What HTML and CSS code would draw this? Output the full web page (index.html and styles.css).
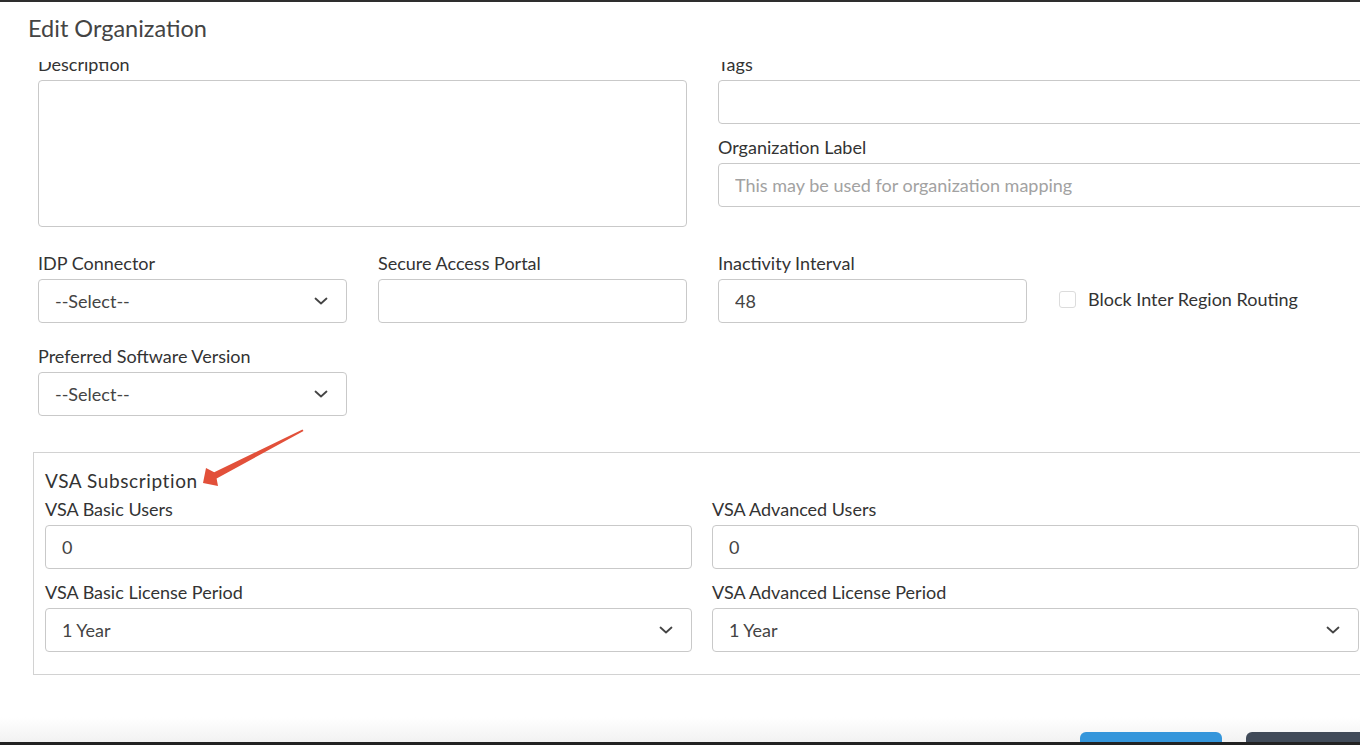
FILE: index.html
```html
<!DOCTYPE html>
<html>
<head>
    <meta charset="UTF-8">
    <title>Edit Organization</title>
    <link rel="stylesheet" href="styles.css">
</head>
<body>
    <div class="modal">
        <div class="modal-header">
            <h2 class="modal-title">Edit Organization</h2>
        </div>

        <div class="modal-body">
            <div class="form">
                <!-- Row 1 -->
                <div class="form-row">
                    <div class="field span-2">
                        <label class="field-label">Description</label>
                        <textarea class="input textarea"></textarea>
                    </div>
                    <div class="span-2">
                        <div class="field">
                            <label class="field-label">Tags</label>
                            <input type="text" class="input" value="">
                        </div>
                        <div class="field next">
                            <label class="field-label">Organization Label</label>
                            <input type="text" class="input" placeholder="This may be used for organization mapping">
                        </div>
                    </div>
                </div>

                <!-- Row 2 -->
                <div class="form-row row-2">
                    <div class="field">
                        <label class="field-label">IDP Connector</label>
                        <div class="select">
                            <span>--Select--</span>
                            <svg class="chevron" width="14" height="8" viewBox="0 0 14 8"><path d="M1.5 1.5 L7 6.5 L12.5 1.5" fill="none" stroke="#444" stroke-width="1.8" stroke-linecap="round" stroke-linejoin="round"/></svg>
                        </div>
                    </div>
                    <div class="field">
                        <label class="field-label">Secure Access Portal</label>
                        <input type="text" class="input" value="">
                    </div>
                    <div class="field">
                        <label class="field-label">Inactivity Interval</label>
                        <input type="text" class="input" value="48">
                    </div>
                    <div class="check-field">
                        <span class="checkbox"></span>
                        <span class="check-label">Block Inter Region Routing</span>
                    </div>
                </div>

                <!-- Row 3 -->
                <div class="form-row row-3">
                    <div class="field">
                        <label class="field-label">Preferred Software Version</label>
                        <div class="select">
                            <span>--Select--</span>
                            <svg class="chevron" width="14" height="8" viewBox="0 0 14 8"><path d="M1.5 1.5 L7 6.5 L12.5 1.5" fill="none" stroke="#444" stroke-width="1.8" stroke-linecap="round" stroke-linejoin="round"/></svg>
                        </div>
                    </div>
                </div>

                <!-- VSA subscription -->
                <div class="vsa-box">
                    <div class="vsa-title">VSA Subscription</div>
                    <div class="vsa-grid">
                        <div class="field">
                            <label class="field-label">VSA Basic Users</label>
                            <input type="text" class="input" value="0">
                        </div>
                        <div class="field">
                            <label class="field-label">VSA Advanced Users</label>
                            <input type="text" class="input" value="0">
                        </div>
                        <div class="field next">
                            <label class="field-label">VSA Basic License Period</label>
                            <div class="select">
                                <span>1 Year</span>
                                <svg class="chevron" width="14" height="8" viewBox="0 0 14 8"><path d="M1.5 1.5 L7 6.5 L12.5 1.5" fill="none" stroke="#444" stroke-width="1.8" stroke-linecap="round" stroke-linejoin="round"/></svg>
                            </div>
                        </div>
                        <div class="field next">
                            <label class="field-label">VSA Advanced License Period</label>
                            <div class="select">
                                <span>1 Year</span>
                                <svg class="chevron" width="14" height="8" viewBox="0 0 14 8"><path d="M1.5 1.5 L7 6.5 L12.5 1.5" fill="none" stroke="#444" stroke-width="1.8" stroke-linecap="round" stroke-linejoin="round"/></svg>
                            </div>
                        </div>
                    </div>
                </div>
            </div>
        </div>

        <div class="modal-footer">
            <button class="btn btn-primary"></button>
            <button class="btn btn-dark"></button>
        </div>

        <!-- screenshot annotation arrow -->
        <svg class="annotation" width="1360" height="745" viewBox="0 0 1360 745">
            <polygon points="203,483 206,468 214.2,472.2 302.5,429.5 303.5,431 216.6,478.6 218,486" fill="#e2503a"/>
        </svg>
    </div>
</body>
</html>
```

FILE: styles.css
```css
* {
    box-sizing: border-box;
}

body {
    margin: 0;
    padding: 0;
    font-family: Lato, "Open Sans", Arial, sans-serif;
    color: #333;
    background: #fff;
    overflow: hidden;
}

.modal {
    position: relative;
    width: 1360px;
    height: 745px;
    display: flex;
    flex-direction: column;
    overflow: hidden;
}

.modal-header {
    height: 62px;
    flex-shrink: 0;
    border-top: 2px solid #2e2e2e;
    padding: 11px 0 0 28px;
}

.modal-title {
    margin: 0;
    font-size: 23.5px;
    line-height: 30px;
    font-weight: 400;
    color: #444;
}

.modal-body {
    flex: 1;
    overflow: hidden;
    padding-left: 38px;
}

.form {
    width: 1340px;
    margin-top: -8px;
}

.form-row {
    display: grid;
    grid-template-columns: repeat(4, 309px);
    column-gap: 31px;
}

.row-2 {
    margin-top: 26px;
}

.row-3 {
    margin-top: 23px;
}

.span-2 {
    grid-column: span 2;
}

.field {
    display: flex;
    flex-direction: column;
}

.field.next {
    margin-top: 13px;
}

.field-label {
    font-size: 18px;
    line-height: 20px;
    margin-bottom: 6px;
    color: #333;
}

.input {
    height: 44px;
    width: 100%;
    border: 1px solid #c9c9c9;
    border-radius: 4px;
    padding: 0 16px;
    font-family: inherit;
    font-size: 18px;
    color: #444;
    background: #fff;
    outline: none;
}

.input::placeholder {
    color: #a2a2a2;
}

.textarea {
    height: 147px;
    resize: none;
}

.select {
    height: 44px;
    border: 1px solid #c9c9c9;
    border-radius: 4px;
    padding: 0 18px 0 16px;
    display: flex;
    align-items: center;
    justify-content: space-between;
    font-size: 18px;
    color: #444;
}

.chevron {
    display: block;
}

.check-field {
    display: flex;
    align-items: center;
    padding-left: 1px;
    margin-top: 36px;
    height: 20px;
}

.checkbox {
    width: 17px;
    height: 17px;
    border: 1px solid #dcdcdc;
    border-radius: 3px;
    margin-right: 12px;
}

.check-label {
    font-size: 18px;
    color: #333;
}

.vsa-box {
    margin: 36px 0 0 -5px;
    width: 1338px;
    border: 1px solid #d2d2d2;
    padding: 17px 11px 22px 11px;
}

.vsa-title {
    font-size: 19px;
    line-height: 22px;
    letter-spacing: 0.6px;
    color: #333;
    margin-bottom: 7px;
}

.vsa-grid {
    display: grid;
    grid-template-columns: 647px 647px;
    column-gap: 20px;
}

.modal-footer {
    height: 28px;
    flex-shrink: 0;
    background: linear-gradient(#fff, #f2f2f2);
    border-bottom: 3px solid #222;
    display: flex;
    align-items: flex-start;
    padding: 15px 0 0 1080px;
    overflow: hidden;
}

.btn {
    height: 40px;
    border: none;
    border-radius: 6px;
    flex-shrink: 0;
}

.btn-primary {
    width: 142px;
    background: #3596db;
    margin-right: 24px;
}

.btn-dark {
    width: 130px;
    background: #414b59;
}

.annotation {
    position: absolute;
    left: 0;
    top: 0;
    pointer-events: none;
}
```
